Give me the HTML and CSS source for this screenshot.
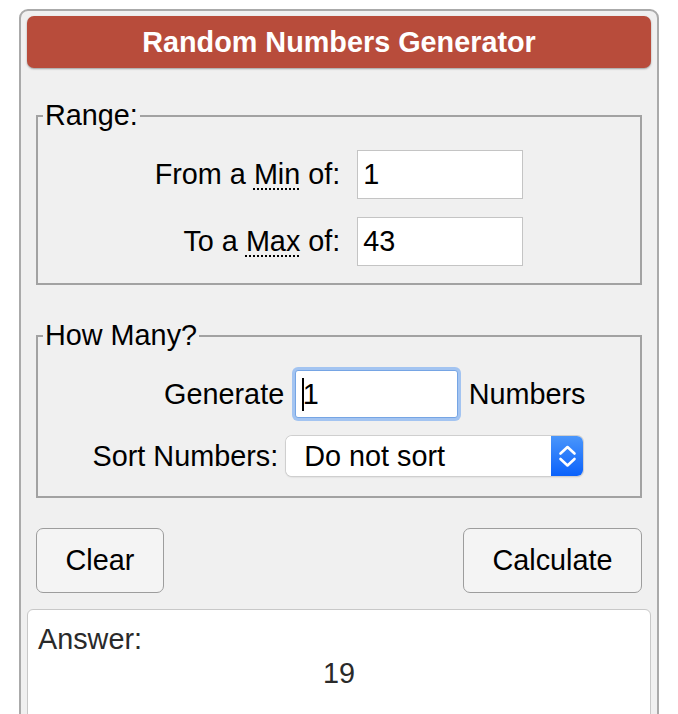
FILE: index.html
```html
<!DOCTYPE html>
<html>
<head>
<meta charset="utf-8">
<title>Random Numbers Generator</title>
<link rel="stylesheet" href="styles.css">
</head>
<body>
<div class="page">
  <div class="panel">
    <h1 class="title">Random Numbers Generator</h1>
    <fieldset class="group group-range">
      <legend class="legend">Range:</legend>
      <div class="range-grid">
        <label class="lbl" for="min">From a <abbr class="abbr" title="Minimum">Min</abbr> of:</label>
        <input class="field field-range" id="min" type="text" value="1">
        <label class="lbl" for="max">To a <abbr class="abbr" title="Maximum">Max</abbr> of:</label>
        <input class="field field-range" id="max" type="text" value="43">
      </div>
    </fieldset>
    <fieldset class="group group-many">
      <legend class="legend">How Many?</legend>
      <div class="many-grid">
        <label class="lbl" for="count">Generate</label>
        <div class="gen-cell">
          <span class="caret-wrap">
            <input class="field field-gen" id="count" type="text" value="1">
            <span class="caret"></span>
          </span>
          <span class="suffix">Numbers</span>
        </div>
        <label class="lbl lbl-sort" for="sort">Sort Numbers:</label>
        <div class="select-wrap">
          <select class="select" id="sort">
            <option>Do not sort</option>
            <option>Ascending</option>
            <option>Descending</option>
          </select>
          <span class="select-arrow">
            <svg width="32" height="40" viewBox="0 0 32 40">
              <path d="M9.5 17.5 L16.5 11 L23.5 17.5" fill="none" stroke="#fff" stroke-width="2.6" stroke-linecap="round" stroke-linejoin="round"/>
              <path d="M9.5 23 L16.5 29.5 L23.5 23" fill="none" stroke="#fff" stroke-width="2.6" stroke-linecap="round" stroke-linejoin="round"/>
            </svg>
          </span>
        </div>
      </div>
    </fieldset>
    <div class="buttons">
      <button class="btn" type="button">Clear</button>
      <button class="btn" type="button">Calculate</button>
    </div>
    <div class="answer">
      <div class="answer-label">Answer:</div>
      <div class="answer-value">19</div>
    </div>
  </div>
</div>
</body>
</html>
```

FILE: styles.css
```css
html, body {
  margin: 0;
  padding: 0;
  background: #ffffff;
}

body {
  font-family: "Liberation Sans", Arial, sans-serif;
  font-size: 28.8px;
  color: #000;
}

.page {
  padding: 9px 0 0 19px;
}

.panel {
  box-sizing: border-box;
  width: 640px;
  min-height: 760px;
  background: #f0f0f0;
  border: 2px solid #aaaaaa;
  border-radius: 9px;
  padding: 5px 6px 0;
}

.title {
  margin: 0;
  height: 52px;
  line-height: 52px;
  background: #b84c3b;
  border-radius: 7px;
  box-shadow: 0 1px 2px rgba(0, 0, 0, 0.35);
  color: #fff;
  font-size: 28.8px;
  font-weight: bold;
  text-align: center;
}

.group {
  margin: 31px 9px 0;
  padding: 18px 5px 17px 5px;
  border: 2px solid #a2a2a2;
  min-width: 0;
}

.group-many {
  margin-top: 34px;
  padding-bottom: 20px;
}

.legend {
  padding: 0 2px;
  line-height: 33px;
  font-size: 28.8px;
}

.range-grid {
  display: grid;
  grid-template-columns: auto auto;
  justify-content: center;
  column-gap: 17px;
  row-gap: 18px;
}

.lbl {
  align-self: center;
  text-align: right;
  line-height: 33px;
}

.abbr {
  text-decoration: underline dotted;
  text-decoration-thickness: 2px;
  text-underline-offset: 4px;
}

.field {
  box-sizing: border-box;
  margin: 0;
  font-family: "Liberation Sans", Arial, sans-serif;
  font-size: 28.8px;
  color: #000;
  background: #fff;
  border: 1px solid #c4c4c4;
  border-radius: 0;
  outline: none;
}

.field-range {
  width: 166px;
  height: 49px;
  padding: 0 5px;
}

.many-grid {
  display: grid;
  grid-template-columns: auto auto;
  justify-content: center;
  column-gap: 2px;
  row-gap: 18px;
}

.lbl-sort {
  margin-right: 6px;
}

.gen-cell {
  display: flex;
  align-items: center;
}

.caret-wrap {
  position: relative;
  display: block;
  margin-left: 8.5px;
}

.field-gen {
  display: block;
  width: 163px;
  height: 48px;
  padding: 0 7px;
  border: 1px solid #76a5e4;
  border-radius: 3px;
  box-shadow: 0 0 0 3px #a3c4f1;
  caret-color: transparent;
}

.caret {
  position: absolute;
  left: 7px;
  top: 8px;
  width: 2px;
  height: 33px;
  background: #000;
}

.suffix {
  margin-left: 11px;
  line-height: 33px;
}

.select-wrap {
  display: flex;
  width: 297px;
  height: 40px;
  box-sizing: border-box;
  border-radius: 6px;
  background: #fff;
  box-shadow: 0 0 0 1px #cfcfcf, 0 1px 2px rgba(0, 0, 0, 0.18);
  overflow: hidden;
  align-self: start;
}

.select {
  flex: 1;
  min-width: 0;
  appearance: none;
  -webkit-appearance: none;
  border: 0;
  margin: 0;
  padding: 0 0 0 18px;
  background: #fff;
  font-family: "Liberation Sans", Arial, sans-serif;
  font-size: 28.8px;
  color: #000;
  outline: none;
}

.select-arrow {
  width: 32px;
  height: 40px;
  display: block;
  background: linear-gradient(#4a96fb, #0b62fb);
}

.select-arrow svg {
  display: block;
}

.buttons {
  display: flex;
  justify-content: space-between;
  margin: 30px 9px 0;
}

.btn {
  height: 65px;
  padding: 0 28.5px;
  margin: 0;
  background: #f4f4f4;
  border: 1.5px solid #9d9d9d;
  border-radius: 7px;
  font-family: "Liberation Sans", Arial, sans-serif;
  font-size: 28.8px;
  color: #000;
}

.answer {
  margin-top: 16px;
  min-height: 200px;
  background: #fff;
  border: 1px solid #c8c8c8;
  border-radius: 6px;
  padding: 12px 10px;
  color: #2a2a2a;
}

.answer-label {
  line-height: 34px;
}

.answer-value {
  line-height: 34px;
  text-align: center;
}
```
